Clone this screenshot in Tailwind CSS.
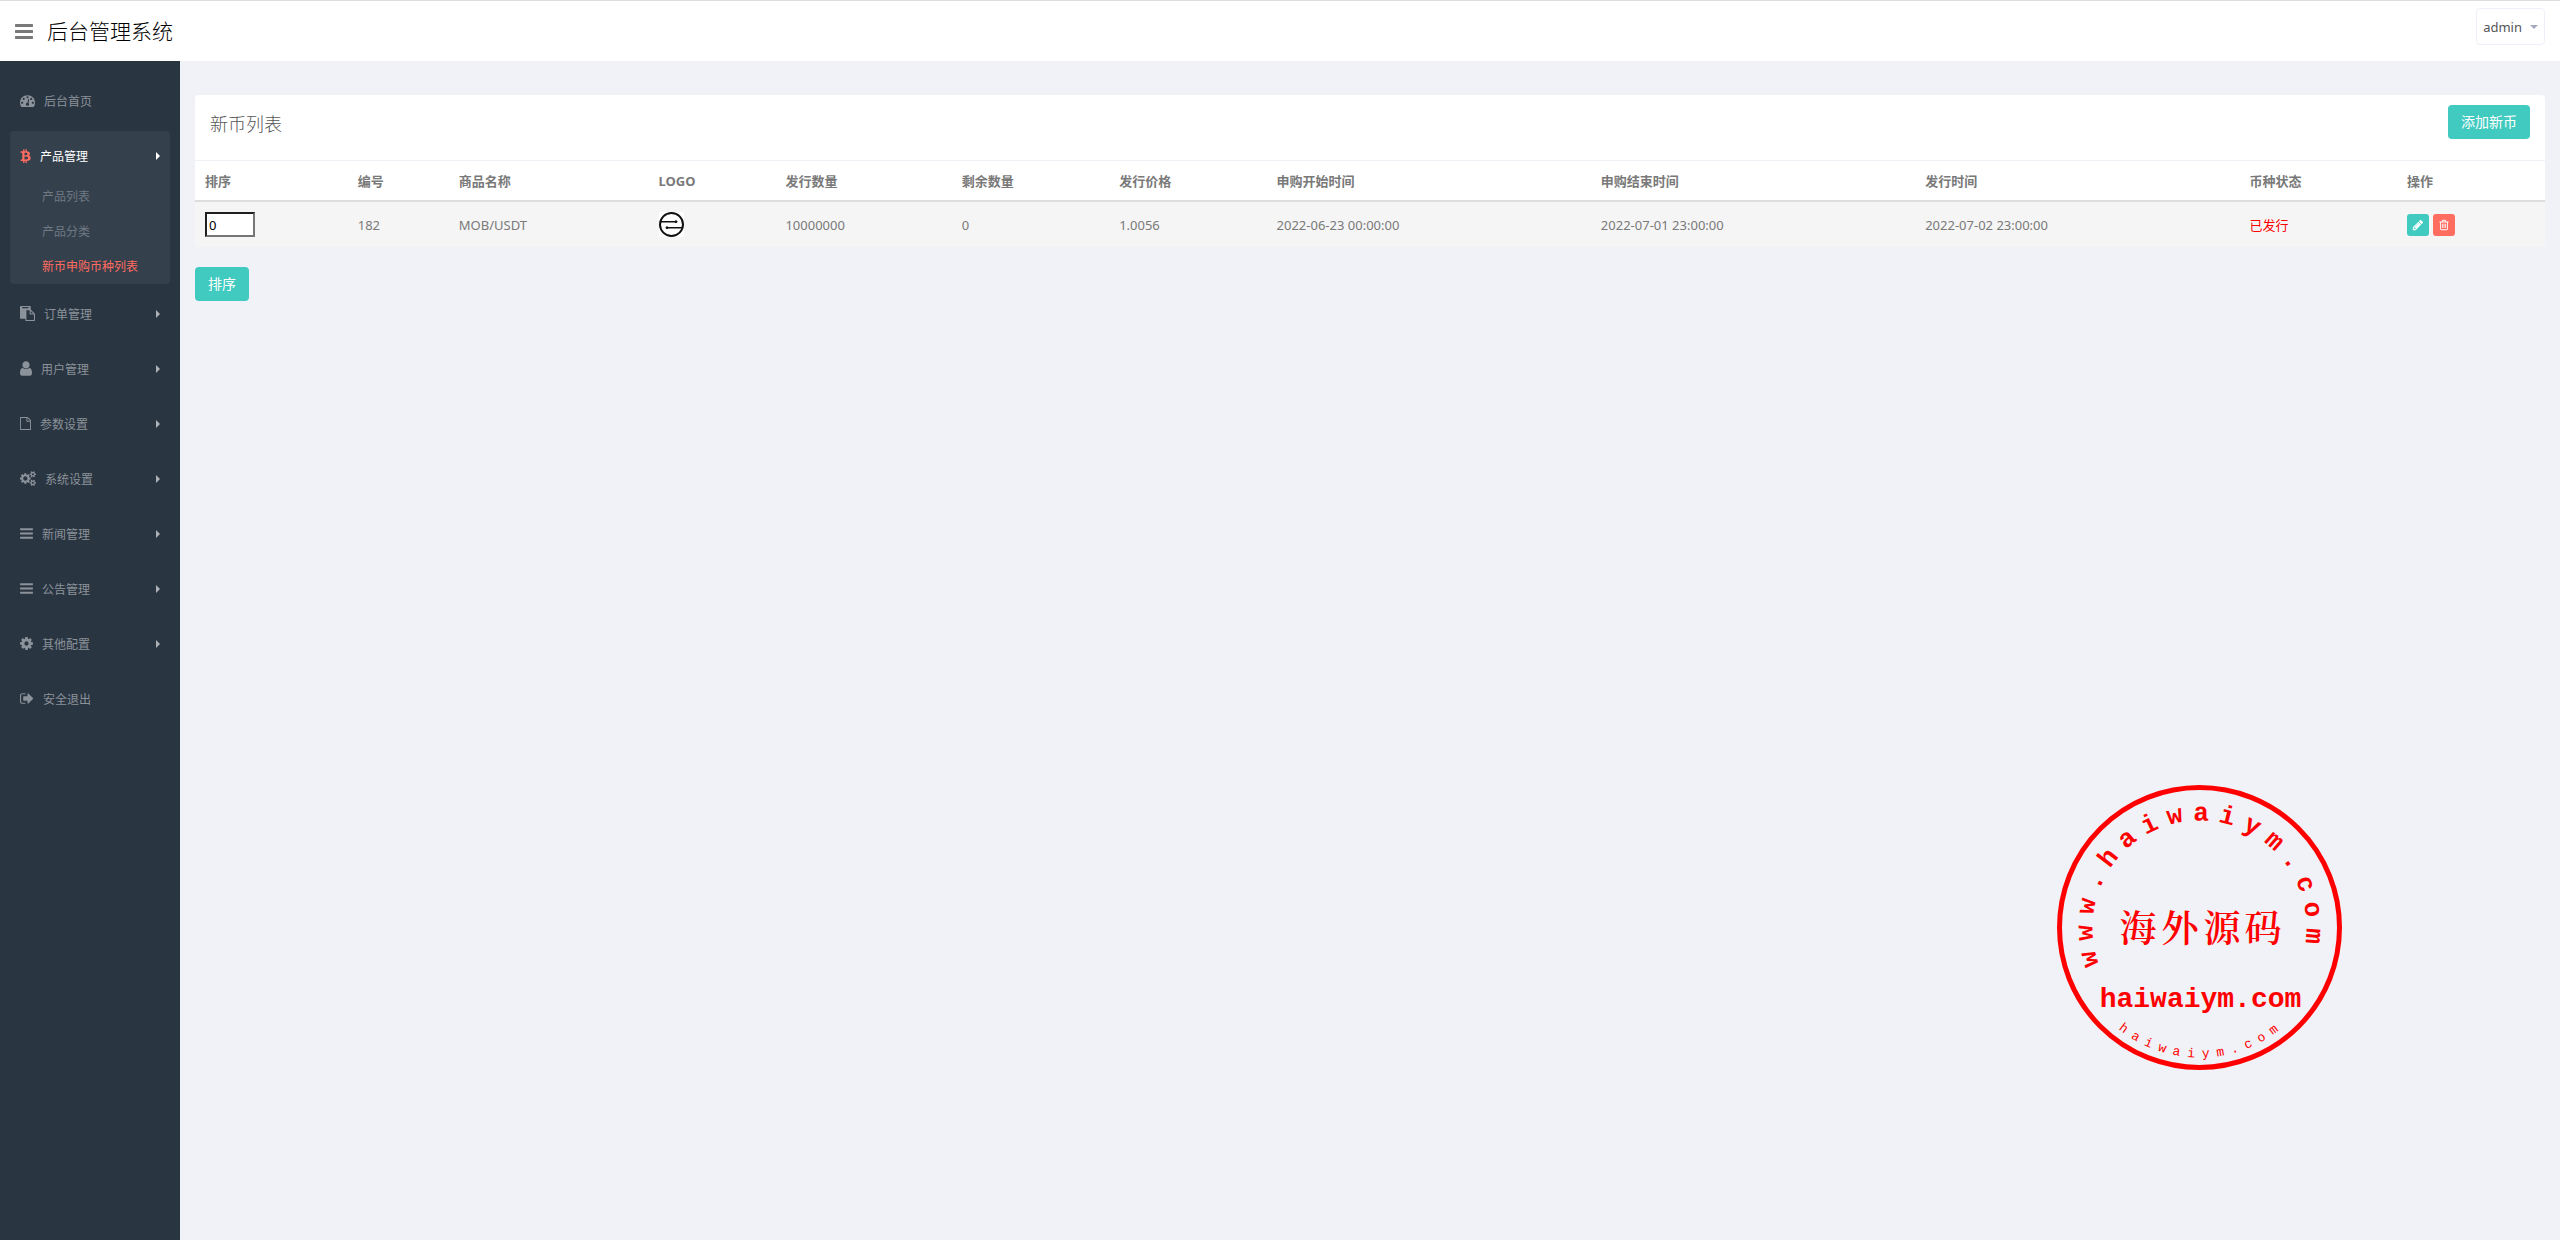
<!DOCTYPE html>
<html lang="zh-CN">

<head>
    <meta charset="UTF-8">
    <meta name="viewport" content="width=device-width, initial-scale=1.0">
    <title>后台管理系统</title>
    <script src="https://cdn.jsdelivr.net/npm/@tailwindcss/browser@4"></script>
</head>

<body class="flex flex-col min-h-screen bg-[#f1f2f7] text-[#797979] text-[13px] leading-5 font-['Noto_Sans','Noto_Sans_CJK_SC',sans-serif]">

    <!-- Top bar -->
    <header class="flex items-start justify-between h-[61px] bg-white border-t border-[#dddddd] pl-[15px] pr-[15px]">
        <div class="flex items-center gap-[14px] h-[60px]">
            <button type="button" aria-label="菜单" class="cursor-pointer">
                <svg class="w-[18px] h-[21px]" viewBox="128 0 1536 1792" fill="#797979"><path d="M1664 1344v128q0 26-19 45t-45 19h-1408q-26 0-45-19t-19-45v-128q0-26 19-45t45-19h1408q26 0 45 19t19 45zm0-512v128q0 26-19 45t-45 19h-1408q-26 0-45-19t-19-45v-128q0-26 19-45t45-19h1408q26 0 45 19t19 45zm0-512v128q0 26-19 45t-45 19h-1408q-26 0-45-19t-19-45v-128q0-26 19-45t45-19h1408q26 0 45 19t19 45z"/></svg>
            </button>
            <a href="#" class="text-[21px] leading-8 font-light text-black">后台管理系统</a>
        </div>
        <button type="button" class="flex items-center gap-2 h-[37px] mt-[7px] px-[6px] border border-[#eeeff8] rounded text-[13px] text-[#555555] cursor-pointer">
            admin
            <svg class="w-2 h-1" viewBox="0 0 8 4" fill="#a4aabb"><path d="M0 0h8L4 4z"/></svg>
        </button>
    </header>

    <div class="flex flex-1">

        <!-- Sidebar -->
        <nav class="w-[180px] shrink-0 bg-[#2a3542] px-[10px] pt-[15px] text-xs text-[#8b9299] [&_span]:pt-[2px] [&_a>svg:first-child]:mb-[2px]">
            <ul class="flex flex-col gap-[5px]">
                <li>
                    <a href="#" class="flex items-center gap-[9px] h-[50px] px-[10px]">
                        <svg class="h-[15px] w-[15px]" viewBox="0 0 1792 1792" fill="currentColor"><path d="M384 1152q0-53-37.5-90.5t-90.5-37.5-90.5 37.5-37.5 90.5 37.5 90.5 90.5 37.5 90.5-37.5 37.5-90.5zm192-448q0-53-37.5-90.5t-90.5-37.5-90.5 37.5-37.5 90.5 37.5 90.5 90.5 37.5 90.5-37.5 37.5-90.5zm428 481l101-382q6-26-7.5-48.5t-38.5-29.5-48 6.5-30 39.5l-101 382q-60 5-107 43.5t-63 98.5q-20 77 20 146t117 89 146-20 89-117q16-60-6-117t-72-91zm660-33q0-53-37.5-90.5t-90.5-37.5-90.5 37.5-37.5 90.5 37.5 90.5 90.5 37.5 90.5-37.5 37.5-90.5zm-640-640q0-53-37.5-90.5t-90.5-37.5-90.5 37.5-37.5 90.5 37.5 90.5 90.5 37.5 90.5-37.5 37.5-90.5zm448 192q0-53-37.5-90.5t-90.5-37.5-90.5 37.5-37.5 90.5 37.5 90.5 90.5 37.5 90.5-37.5 37.5-90.5zm320 448q0 261-141 483-19 29-54 29h-1402q-35 0-54-29-141-221-141-483 0-182 71-348t191-286 286-191 348-71 348 71 286 191 191 286 71 348z"/></svg>
                        <span>后台首页</span>
                    </a>
                </li>
                <li class="rounded bg-[#35404d]">
                    <a href="#" class="flex items-center gap-[9px] h-12 px-[10px] pt-[2px] text-white">
                        <svg class="h-[15px] w-[11px] text-[#ff6c60]" viewBox="250 0 1250 1792" fill="currentColor"><path d="M1399 651q18 182-131 258 117 28 175 103t45 214q-7 71-32.5 125t-64.5 89-97 58.5-121.5 34.5-145.5 15v255h-154v-251q-80 0-122-1v252h-154v-255q-18 0-54-.5t-55-.5h-200l31-183h111q50 0 58-51v-402h16q-6-1-16-1v-287q-13-68-89-68h-111v-164l212 1q64 0 97-1v-252h154v247q82-2 122-2v-245h154v252q79 7 140 22.5t113 45 82.5 78 36.5 114.5zm-215 545q0-36-15-64t-37-46-57.5-30.5-65.5-18.5-74-9-69-3-64.5 1-47.5 1v338q8 0 37 .5t48 .5 53-1.5 58.5-4 57-8.5 55.5-14 47.5-21 39.5-30 24.5-40 9.5-51zm-71-476q0-33-12.5-58.5t-30.5-42-48-28-55-16.5-61.5-8-58-2.5-54 1-39.5.5v307q5 0 34.5.5t46.5 0 50-2 55-5.5 51.5-11 48.5-18.5 37-27 27-38.5 9-51z"/></svg>
                        <span>产品管理</span>
                        <svg class="w-1 h-2 ml-auto" viewBox="0 0 4 8" fill="currentColor"><path d="M0 0v8l4-4z"/></svg>
                    </a>
                    <ul class="text-[#6e7983]">
                        <li><a href="#" class="flex items-center h-[35px] pl-8">产品列表</a></li>
                        <li><a href="#" class="flex items-center h-[35px] pl-8">产品分类</a></li>
                        <li><a href="#" class="flex items-center h-[35px] pl-8 text-[#ff6c60]">新币申购币种列表</a></li>
                    </ul>
                </li>
                <li>
                    <a href="#" class="flex items-center gap-[9px] h-[50px] px-[10px]">
                        <svg class="h-[15px] w-[15px]" viewBox="0 0 1792 1792" fill="currentColor"><path d="M768 1664h896v-640h-416q-40 0-68-28t-28-68v-416h-384v1152zm256-1440v-64q0-13-9.500-22.500t-22.500-9.500h-704q-13 0-22.500 9.500t-9.500 22.500v64q0 13 9.500 22.500t22.500 9.500h704q13 0 22.500-9.500t9.500-22.500zm256 672h299l-299-299v299zm512 128v672q0 40-28 68t-68 28h-960q-40 0-68-28t-28-68v-160h-544q-40 0-68-28t-28-68v-1344q0-40 28-68t68-28h1088q40 0 68 28t28 68v328q21 13 36 28l408 408q28 28 48 76t20 88z"/></svg>
                        <span>订单管理</span>
                        <svg class="w-1 h-2 ml-auto" viewBox="0 0 4 8" fill="#aeb2b7"><path d="M0 0v8l4-4z"/></svg>
                    </a>
                </li>
                <li>
                    <a href="#" class="flex items-center gap-[9px] h-[50px] px-[10px]">
                        <svg class="h-[15px] w-3" viewBox="256 128 1280 1536" fill="currentColor"><path d="M1536 1399q0 109-62.5 187t-150.5 78h-854q-88 0-150.5-78t-62.5-187q0-85 8.500-160.500t31.500-152 58.500-131 94-89 134.500-34.500q131 128 313 128t313-128q76 0 134.500 34.500t94 89 58.500 131 31.500 152 8.500 160.500zm-256-887q0 159-112.500 271.500t-271.500 112.500-271.500-112.500-112.500-271.500 112.500-271.500 271.500-112.500 271.500 112.500 112.500 271.500z"/></svg>
                        <span>用户管理</span>
                        <svg class="w-1 h-2 ml-auto" viewBox="0 0 4 8" fill="#aeb2b7"><path d="M0 0v8l4-4z"/></svg>
                    </a>
                </li>
                <li>
                    <a href="#" class="flex items-center gap-[9px] h-[50px] px-[10px]">
                        <svg class="h-[13px] w-[11px]" viewBox="128 0 1536 1792" fill="currentColor"><path d="M1596 380q28 28 48 76t20 88v1152q0 40-28 68t-68 28h-1344q-40 0-68-28t-28-68v-1600q0-40 28-68t68-28h896q40 0 88 20t76 48zm-444-244v376h376q-10-29-22-41l-313-313q-12-12-41-22zm384 1528v-1024h-416q-40 0-68-28t-28-68v-416h-768v1536h1280z"/></svg>
                        <span>参数设置</span>
                        <svg class="w-1 h-2 ml-auto" viewBox="0 0 4 8" fill="#aeb2b7"><path d="M0 0v8l4-4z"/></svg>
                    </a>
                </li>
                <li>
                    <a href="#" class="flex items-center gap-[9px] h-[50px] px-[10px]">
                        <svg class="h-[15px] w-4" viewBox="0 0 1920 1792" fill="currentColor"><path d="M896 896q0-106-75-181t-181-75-181 75-75 181 75 181 181 75 181-75 75-181zm768 512q0-52-38-90t-90-38-90 38-38 90q0 53 37.5 90.500t90.500 37.500 90.500-37.500 37.500-90.500zm0-1024q0-52-38-90t-90-38-90 38-38 90q0 53 37.500 90.500t90.500 37.500 90.500-37.500 37.500-90.500zm-384 421v185q0 10-7 19.500t-16 10.500l-155 24q-11 35-32 76 34 48 90 115 7 11 7 20 0 12-7 19-23 30-82.500 89.500t-78.500 59.500q-11 0-21-7l-115-90q-37 19-77 31-11 108-23 155-7 24-30 24h-186q-11 0-20-7.500t-10-17.500l-23-153q-34-10-75-31l-118 89q-7 7-20 7-11 0-21-8-144-133-144-160 0-9 7-19 10-14 41-53t47-61q-23-44-35-82l-152-24q-10-1-17-9.500t-7-19.500v-185q0-10 7-19.500t16-10.500l155-24q11-35 32-76-34-48-90-115-7-11-7-20 0-12 7-20 22-30 82-89t79-59q11 0 21 7l115 90q34-18 77-32 11-108 23-154 7-24 30-24h186q11 0 20 7.500t10 17.500l23 153q34 10 75 31l118-89q8-7 20-7 11 0 21 8 144 133 144 160 0 8-7 19-12 16-42 54t-45 60q23 48 34 82l152 23q10 2 17 10.500t7 19.500zm640 533v140q0 16-149 31-12 27-30 52 51 113 51 138 0 4-4 7-122 71-124 71-8 0-46-47t-52-68q-20 2-30 2t-30-2q-14 21-52 68t-46 47q-2 0-124-71-4-3-4-7 0-25 51-138-18-25-30-52-149-15-149-31v-140q0-16 149-31 13-29 30-52-51-113-51-138 0-4 4-7 4-2 35-20t59-34 30-16q8 0 46 46.500t52 67.500q20-2 30-2t30 2q51-71 92-112l6-2q4 0 124 70 4 3 4 7 0 25-51 138 17 23 30 52 149 15 149 31zm0-1024v140q0 16-149 31-12 27-30 52 51 113 51 138 0 4-4 7-122 71-124 71-8 0-46-47t-52-68q-20 2-30 2t-30-2q-14 21-52 68t-46 47q-2 0-124-71-4-3-4-7 0-25 51-138-18-25-30-52-149-15-149-31v-140q0-16 149-31 13-29 30-52-51-113-51-138 0-4 4-7 4-2 35-20t59-34 30-16q8 0 46 46.500t52 67.500q20-2 30-2t30 2q51-71 92-112l6-2q4 0 124 70 4 3 4 7 0 25-51 138 17 23 30 52 149 15 149 31z"/></svg>
                        <span>系统设置</span>
                        <svg class="w-1 h-2 ml-auto" viewBox="0 0 4 8" fill="#aeb2b7"><path d="M0 0v8l4-4z"/></svg>
                    </a>
                </li>
                <li>
                    <a href="#" class="flex items-center gap-[9px] h-[50px] px-[10px]">
                        <svg class="h-[15px] w-[13px]" viewBox="128 0 1536 1792" fill="currentColor"><path d="M1664 1344v128q0 26-19 45t-45 19h-1408q-26 0-45-19t-19-45v-128q0-26 19-45t45-19h1408q26 0 45 19t19 45zm0-512v128q0 26-19 45t-45 19h-1408q-26 0-45-19t-19-45v-128q0-26 19-45t45-19h1408q26 0 45 19t19 45zm0-512v128q0 26-19 45t-45 19h-1408q-26 0-45-19t-19-45v-128q0-26 19-45t45-19h1408q26 0 45 19t19 45z"/></svg>
                        <span>新闻管理</span>
                        <svg class="w-1 h-2 ml-auto" viewBox="0 0 4 8" fill="#aeb2b7"><path d="M0 0v8l4-4z"/></svg>
                    </a>
                </li>
                <li>
                    <a href="#" class="flex items-center gap-[9px] h-[50px] px-[10px]">
                        <svg class="h-[15px] w-[13px]" viewBox="128 0 1536 1792" fill="currentColor"><path d="M1664 1344v128q0 26-19 45t-45 19h-1408q-26 0-45-19t-19-45v-128q0-26 19-45t45-19h1408q26 0 45 19t19 45zm0-512v128q0 26-19 45t-45 19h-1408q-26 0-45-19t-19-45v-128q0-26 19-45t45-19h1408q26 0 45 19t19 45zm0-512v128q0 26-19 45t-45 19h-1408q-26 0-45-19t-19-45v-128q0-26 19-45t45-19h1408q26 0 45 19t19 45z"/></svg>
                        <span>公告管理</span>
                        <svg class="w-1 h-2 ml-auto" viewBox="0 0 4 8" fill="#aeb2b7"><path d="M0 0v8l4-4z"/></svg>
                    </a>
                </li>
                <li>
                    <a href="#" class="flex items-center gap-[9px] h-[50px] px-[10px]">
                        <svg class="h-[15px] w-[13px]" viewBox="128 0 1536 1792" fill="currentColor"><path d="M1152 896q0-106-75-181t-181-75-181 75-75 181 75 181 181 75 181-75 75-181zm512-109v222q0 12-8 23t-20 13l-185 28q-19 54-39 91 35 50 107 138 10 12 10 25t-9 23q-27 37-99 108t-94 71q-12 0-26-9l-138-108q-44 23-91 38-16 136-29 186-7 28-36 28h-222q-14 0-24.500-8.500t-11.500-21.500l-28-184q-49-16-90-37l-141 107q-10 9-25 9-14 0-25-11-126-114-165-168-7-10-7-23 0-12 8-23 15-21 51-66.500t54-70.500q-27-50-41-99l-183-27q-13-2-21-12.500t-8-23.500v-222q0-12 8-23t19-13l186-28q14-46 39-92-40-57-107-138-10-12-10-24 0-10 9-23 26-36 98.500-107.500t94.500-71.500q13 0 26 10l138 107q44-23 91-38 16-136 29-186 7-28 36-28h222q14 0 24.500 8.500t11.500 21.500l28 184q49 16 90 37l142-107q9-9 24-9 13 0 25 10 129 119 165 170 7 8 7 22 0 12-8 23-15 21-51 66.500t-54 70.500q26 50 41 98l183 28q13 2 21 12.500t8 23.500z"/></svg>
                        <span>其他配置</span>
                        <svg class="w-1 h-2 ml-auto" viewBox="0 0 4 8" fill="#aeb2b7"><path d="M0 0v8l4-4z"/></svg>
                    </a>
                </li>
                <li>
                    <a href="#" class="flex items-center gap-[9px] h-[50px] px-[10px]">
                        <svg class="h-[15px] w-[14px]" viewBox="64 0 1672 1792" fill="currentColor"><path d="M704 1440q0 4 1 20t.5 26.500-3 23.500-10 19.500-20.500 6.500h-320q-119 0-203.500-84.500t-84.500-203.500v-704q0-119 84.500-203.500t203.500-84.500h320q13 0 22.500 9.500t9.500 22.500q0 4 1 20t.5 26.500-3 23.500-10 19.500-20.500 6.500h-320q-66 0-113 47t-47 113v704q0 66 47 113t113 47h312l11.500 1 11.500 3 8 5.500 7 9 2 13.500zm928-544q0 26-19 45l-544 544q-19 19-45 19t-45-19-19-45v-288h-448q-26 0-45-19t-19-45v-384q0-26 19-45t45-19h448v-288q0-26 19-45t45-19 45 19l544 544q19 19 19 45z"/></svg>
                        <span>安全退出</span>
                    </a>
                </li>
            </ul>
        </nav>

        <!-- Content -->
        <main class="flex-1 min-w-0 px-[15px] pt-[34px]">
            <section class="bg-white rounded overflow-hidden">
                <div class="flex items-start justify-between h-[66px] px-[15px] pt-[10px] border-b border-[#eff2f7]">
                    <h1 class="text-lg leading-[38px] font-light text-[#555555]">新币列表</h1>
                    <button type="button" class="h-[34px] px-[13px] rounded bg-[#41cac0] text-sm text-white cursor-pointer">添加新币</button>
                </div>
                <table class="w-full table-fixed text-left">
                    <thead>
                        <tr class="h-10 border-b-2 border-[#dddddd]">
                            <th class="w-[6.5%] px-[10px]">排序</th>
                            <th class="w-[4.3%] px-[10px]">编号</th>
                            <th class="w-[8.5%] px-[10px]">商品名称</th>
                            <th class="w-[5.4%] px-[10px]">LOGO</th>
                            <th class="w-[7.5%] px-[10px]">发行数量</th>
                            <th class="w-[6.7%] px-[10px]">剩余数量</th>
                            <th class="w-[6.7%] px-[10px]">发行价格</th>
                            <th class="w-[13.8%] px-[10px]">申购开始时间</th>
                            <th class="w-[13.8%] px-[10px]">申购结束时间</th>
                            <th class="w-[13.8%] px-[10px]">发行时间</th>
                            <th class="w-[6.7%] px-[10px]">币种状态</th>
                            <th class="w-[6.3%] px-[10px]">操作</th>
                        </tr>
                    </thead>
                    <tbody>
                        <tr class="h-[46px] bg-[#f5f5f5]">
                            <td class="px-[10px]">
                                <input type="text" value="0" aria-label="排序" class="block w-[50px] h-[25px] px-[2px] bg-white border-2 border-t-[#1f1f1f] border-l-[#1f1f1f] border-r-[#767676] border-b-[#767676] text-black">
                            </td>
                            <td class="px-[10px]">182</td>
                            <td class="px-[10px]">MOB/USDT</td>
                            <td class="px-[10px]">
                                <svg class="w-[25px] h-[25px] bg-white" viewBox="0 0 25 25" fill="none" stroke="#111111">
                                    <circle cx="12.5" cy="12.5" r="11.5" stroke-width="2"/>
                                    <path d="M1.500 9.700H17M8 15.700H23.500" stroke-width="1.500"/>
                                    <circle cx="17" cy="9.700" r="1" fill="#111111"/>
                                    <circle cx="8" cy="15.700" r="1" fill="#111111"/>
                                </svg>
                            </td>
                            <td class="px-[10px]">10000000</td>
                            <td class="px-[10px]">0</td>
                            <td class="px-[10px]">1.0056</td>
                            <td class="px-[10px]">2022-06-23 00:00:00</td>
                            <td class="px-[10px]">2022-07-01 23:00:00</td>
                            <td class="px-[10px]">2022-07-02 23:00:00</td>
                            <td class="px-[10px] text-[#ff0000]">已发行</td>
                            <td class="px-[10px]">
                                <div class="flex gap-1">
                                    <button type="button" aria-label="编辑" class="flex items-center justify-center w-[22px] h-[22px] rounded-[3px] bg-[#41cac0] cursor-pointer">
                                        <svg class="w-3 h-3" viewBox="0 0 1792 1792" fill="#ffffff"><path d="M491 1536l91-91-235-235-91 91v107h128v128h107zm523-928q0-22-22-22-10 0-17 7l-542 542q-7 7-7 17 0 22 22 22 10 0 17-7l542-542q7-7 7-17zm-54-192l416 416-832 832h-416v-416zm683 96q0 53-37 90l-166 166-416-416 166-165q36-38 90-38 53 0 91 38l235 234q37 39 37 91z"/></svg>
                                    </button>
                                    <button type="button" aria-label="删除" class="flex items-center justify-center w-[22px] h-[22px] rounded-[3px] bg-[#ff6c60] cursor-pointer">
                                        <svg class="w-3 h-3" viewBox="0 0 1792 1792" fill="#ffffff"><path d="M704 736v576q0 14-9 23t-23 9h-64q-14 0-23-9t-9-23v-576q0-14 9-23t23-9h64q14 0 23 9t9 23zm256 0v576q0 14-9 23t-23 9h-64q-14 0-23-9t-9-23v-576q0-14 9-23t23-9h64q14 0 23 9t9 23zm256 0v576q0 14-9 23t-23 9h-64q-14 0-23-9t-9-23v-576q0-14 9-23t23-9h64q14 0 23 9t9 23zm128 724v-948h-896v948q0 22 7 40.500t14.500 27 10.500 8.500h832q3 0 10.500-8.500t14.500-27 7-40.500zm-672-1076h448l-48-117q-7-9-17-11h-317q-10 2-17 11zm928 32v64q0 14-9 23t-23 9h-96v948q0 83-47 143.500t-113 60.500h-832q-66 0-113-58.500t-47-141.500v-952h-96q-14 0-23-9t-9-23v-64q0-14 9-23t23-9h309l70-167q15-37 54-63t79-26h320q40 0 79 26t54 63l70 167h309q14 0 23 9t9 23z"/></svg>
                                    </button>
                                </div>
                            </td>
                        </tr>
                    </tbody>
                </table>
            </section>
            <button type="button" class="h-[34px] mt-5 px-[13px] rounded bg-[#41cac0] text-sm text-white cursor-pointer">排序</button>
        </main>
    </div>

    <!-- Round stamp over the page -->
    <svg class="absolute right-[218px] top-[785px] w-[285px] h-[285px] pointer-events-none" viewBox="-142.5 -142.5 285 285" fill="#ff0000">
        <circle r="140" fill="none" stroke="#ff0000" stroke-width="5"/>
        <text id="arcTop" class="font-['Liberation_Mono',monospace] font-bold text-[26px]">www.haiwaiym.com</text>
        <text x="-80 -38 4 45" y="14" class="font-['Noto_Serif_CJK_SC','Noto_Sans_CJK_SC',sans-serif] font-semibold text-[37px]">海外源码</text>
        <text y="79" x="1" text-anchor="middle" class="font-['Liberation_Mono',monospace] font-bold text-[28px]">haiwaiym.com</text>
        <text id="arcBottom" class="font-['Liberation_Mono',monospace] text-[13px]">haiwaiym.com</text>
    </svg>

    <script>
        // Put every letter of a text on a circle, centred on its own angle
        function placeOnArc(id, radius, start, step, size, below) {
            const el = document.getElementById(id);
            const half = size * 0.3;
            const xs = [], ys = [], turns = [];
            for (let i = 0; i < el.textContent.length; i++) {
                const deg = start + step * i;
                const turn = below ? -deg : deg;
                const a = deg * Math.PI / 180;
                const t = turn * Math.PI / 180;
                xs.push(radius * Math.sin(a) - half * Math.cos(t));
                ys.push((below ? radius : -radius) * Math.cos(a) - half * Math.sin(t));
                turns.push(turn);
            }
            el.setAttribute("x", xs.join(" "));
            el.setAttribute("y", ys.join(" "));
            el.setAttribute("rotate", turns.join(" "));
        }

        placeOnArc("arcTop", 107, -106, 13.35, 26, false);
        placeOnArc("arcBottom", 130, -37, 6.63, 13, true);
    </script>

</body>

</html>
